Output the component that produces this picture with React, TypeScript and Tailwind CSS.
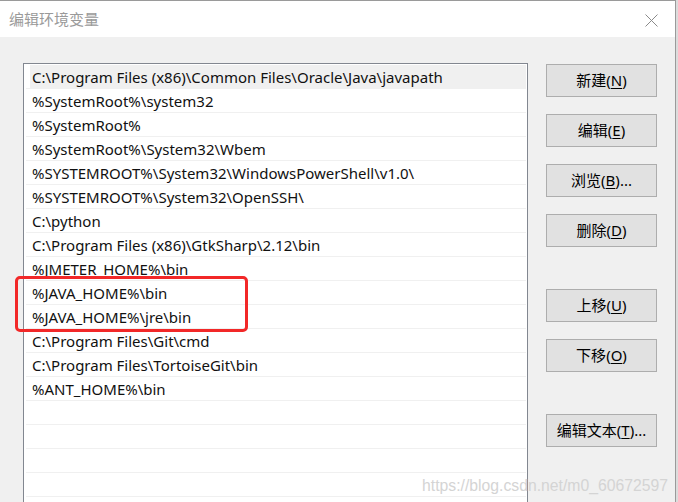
import React from "react";

const paths = [
  "C:\\Program Files (x86)\\Common Files\\Oracle\\Java\\javapath",
  "%SystemRoot%\\system32",
  "%SystemRoot%",
  "%SystemRoot%\\System32\\Wbem",
  "%SYSTEMROOT%\\System32\\WindowsPowerShell\\v1.0\\",
  "%SYSTEMROOT%\\System32\\OpenSSH\\",
  "C:\\python",
  "C:\\Program Files (x86)\\GtkSharp\\2.12\\bin",
  "%JMETER_HOME%\\bin",
  "%JAVA_HOME%\\bin",
  "%JAVA_HOME%\\jre\\bin",
  "C:\\Program Files\\Git\\cmd",
  "C:\\Program Files\\TortoiseGit\\bin",
  "%ANT_HOME%\\bin",
  "",
  "",
  "",
  "",
  "",
];

const ui = { fontFamily: '"Noto Sans", "Noto Sans CJK SC", sans-serif' };

function Btn({ label, hot, tail = "", className = "" }: { label: string; hot: string; tail?: string; className?: string }) {
  return (
    <div
      className={`h-[33px] w-[111px] border border-[#adadad] bg-[#e1e1e1] flex items-center justify-center text-[15px] text-black leading-none ${className}`}
      style={ui}
    >
      <span>
        {label}(<span className="underline underline-offset-2">{hot}</span>){tail}
      </span>
    </div>
  );
}

export default function App() {
  return (
    <div className="relative w-[678px] h-[502px] overflow-hidden flex bg-[#dcdcdc]">
      <div className="w-[676px] h-full flex flex-col border-t border-r border-[#9a9a9a] bg-[#f0f0f0]">
        {/* title bar */}
        <div className="h-[36px] shrink-0 bg-white flex items-center justify-between pl-[9px] pr-[17px]">
          <span className="text-[15px] text-[#9a9a9a]" style={{ fontFamily: '"Noto Sans CJK SC", sans-serif' }}>
            编辑环境变量
          </span>
          <svg width="13" height="13" viewBox="0 0 13 13" className="mt-[2px]">
            <path d="M0.5 0.5 L12.5 12.5 M12.5 0.5 L0.5 12.5" stroke="#8a8a8a" strokeWidth="1" />
          </svg>
        </div>

        {/* body */}
        <div className="flex flex-1 min-h-0">
          <div className="ml-[23px] mt-[26px] w-[505px] flex-none border-l border-t border-r border-[#828790] bg-white pt-px px-px">
            {paths.map((p, i) => (
              <div key={i} className="h-[24px] border-b border-[#f0f0f0] ml-px flex">
                <div
                  className={`flex-1 flex items-center pl-[2px] pt-px ml-[4px] text-[15px] text-[#111] whitespace-nowrap ${
                    i === 0 ? "bg-[#f0f0f0]" : ""
                  }`}
                  style={ui}
                >
                  {p}
                </div>
              </div>
            ))}
          </div>

          <div className="ml-[18px] mt-[27px] flex flex-col">
            <Btn label="新建" hot="N" />
            <Btn label="编辑" hot="E" className="mt-[17px]" />
            <Btn label="浏览" hot="B" tail="..." className="mt-[17px]" />
            <Btn label="删除" hot="D" className="mt-[17px]" />
            <Btn label="上移" hot="U" className="mt-[42px]" />
            <Btn label="下移" hot="O" className="mt-[17px]" />
            <Btn label="编辑文本" hot="T" tail="..." className="mt-[42px]" />
          </div>
        </div>
      </div>

      {/* highlight box */}
      <div className="absolute left-[15px] top-[276px] w-[233px] h-[56px] border-[3px] border-[#f22828] rounded-[5px]" />

      {/* watermark */}
      <div
        className="absolute left-[422px] top-[474px] text-[15.75px] text-[#d4d4d4] whitespace-nowrap"
        style={{ fontFamily: '"Liberation Sans", Arial, sans-serif' }}
      >
        https://blog.csdn.net/m0_60672597
      </div>
    </div>
  );
}
